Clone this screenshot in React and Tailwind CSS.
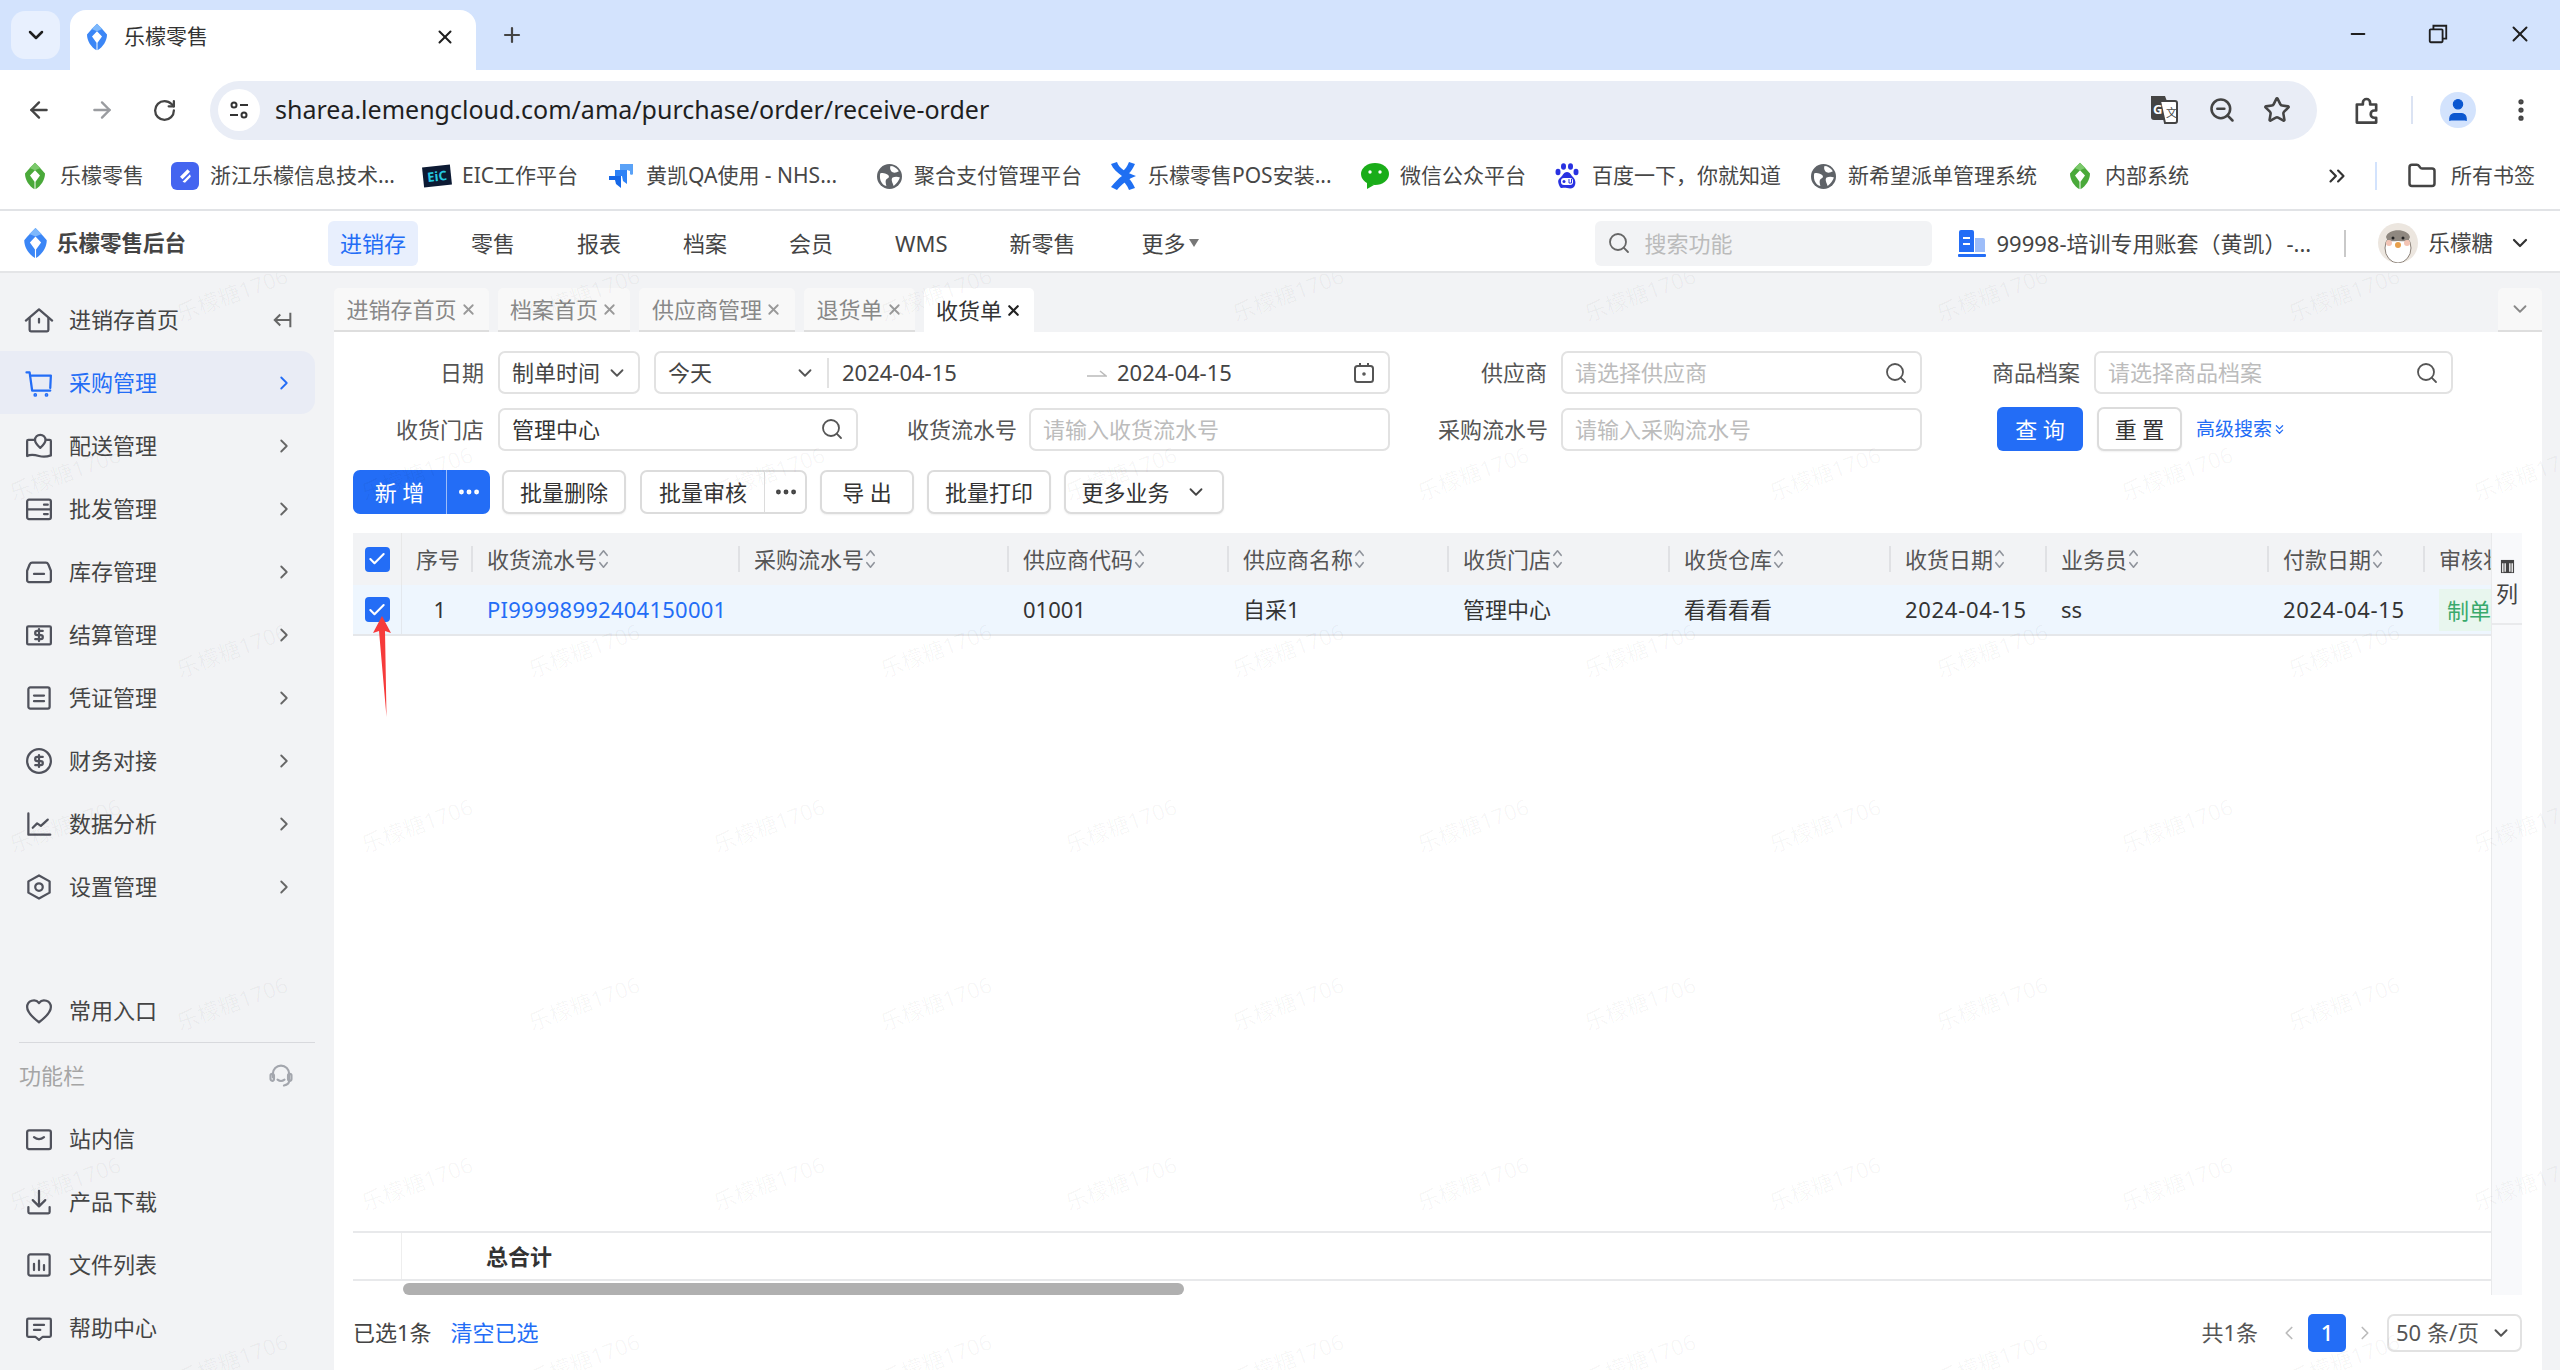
import React from 'react';
import { ArrowLeft, ArrowRight, RotateCw, Plus, X, ChevronDown, ChevronsDown, ChevronRight, ChevronLeft, Search, Star, ZoomOut, EllipsisVertical, ChevronsRight, Folder, User, Minus, Ellipsis, Check } from 'lucide-react';

const Ico = ({ className, children, sw = 1.8 }) => (
  <svg viewBox="0 0 24 24" fill="none" stroke="currentColor" strokeWidth={sw} strokeLinecap="round" strokeLinejoin="round" className={className}>
    {children}
  </svg>
);

const Logo = ({ color = '#3b86f6', light = '#7db8fc', className }) => (
  <svg viewBox="0 0 24 32" className={className}>
    <path d="M12 0C15 3 20 8 24 13 24 21 19 28 12.6 32V23L18 15.5 12 9 6 15.5 11.4 23V32C5 28 0 21 0 13 4 8 9 3 12 0Z" fill={color} />
    <path d="M12 0 18.5 6.5 12 9 5.5 6.5Z" fill={light} />
  </svg>
);

const dollar = <path d="M15 8.7h-4.4a1.65 1.65 0 0 0 0 3.3h2.8a1.65 1.65 0 0 1 0 3.3H9M12 7.2v9.6" />;

const sideIcons = {
  home: <><path d="M1.5 12.5 12 3.5l10.5 9" /><path d="M4.5 10.5V20a1 1 0 0 0 1 1h13a1 1 0 0 0 1-1v-9.5" /><path d="M12 11v3" /></>,
  cart: <><path d="M2 3.5h2.5L6.5 18H21" /><path d="M5.5 6H21.5L21 16" /><circle cx="9" cy="21.5" r=".6" /><circle cx="18" cy="21.5" r=".6" /></>,
  map: <><path d="M8 7H3.5a1 1 0 0 0-1 1v12c3-1.6 6-1 9.5 0s6.5.6 9.5-.5V8a1 1 0 0 0-1-1H18" /><path d="M13 3a4.2 4.2 0 0 1 4.2 4.2c0 2.5-4.2 6.3-4.2 6.3S8.8 9.7 8.8 7.2A4.2 4.2 0 0 1 13 3Z" /></>,
  wholesale: <><rect x="2.5" y="4.5" width="19" height="15.5" rx="1.5" /><path d="M2.5 12.2h19M16 8.5h3M16 16h3" /></>,
  store: <><path d="M6.5 4.5h11c1 0 1.5.5 2 1.5l2 5v7.5a1.5 1.5 0 0 1-1.5 1.5H4a1.5 1.5 0 0 1-1.5-1.5V11l2-5c.5-1 1-1.5 2-1.5Z" /><path d="M8 13.5h8" /></>,
  settle: <><rect x="2.5" y="5" width="19" height="14.5" rx="1" />{dollar}</>,
  voucher: <><rect x="3.5" y="3.5" width="17" height="17" rx="1.5" /><path d="M8 10h8M8 14.5h8" /></>,
  finance: <><circle cx="12" cy="12" r="9.5" />{dollar}</>,
  chart: <><path d="M3.5 3.5V20.5H21" /><path d="M7 15l3.5-3.5 3 2 5.5-5" /></>,
  setting: <><path d="M12 2.8 20.5 7.5v9L12 21.2 3.5 16.5v-9Z" /><circle cx="12" cy="12" r="3" /></>,
  heart: <path d="M12 21C6 16.5 2.5 13 2.5 8.8A5.3 5.3 0 0 1 12 5.6a5.3 5.3 0 0 1 9.5 3.2C21.5 13 18 16.5 12 21Z" />,
  mail: <><rect x="2.5" y="5" width="19" height="15" rx="1.5" /><path d="M8 10.5c2.5 2 5.5 2 8 0" /></>,
  download: <><path d="M12 3v12M7 10.5l5 5 5-5" /><path d="M3.5 16v4a1 1 0 0 0 1 1h15a1 1 0 0 0 1-1v-4" /></>,
  files: <><rect x="3.5" y="3.5" width="17" height="17" rx="1.5" /><path d="M8 11v5M12 8.5V16M16 12v4" /></>,
  help: <><path d="M3.5 4.5h17a1 1 0 0 1 1 1V18a1 1 0 0 1-1 1H15l-3 2.5L9 19H3.5a1 1 0 0 1-1-1V5.5a1 1 0 0 1 1-1Z" /><path d="M8 9.5h8M8 13.5h5" /></>,
};

const menu = [
  ['采购管理', 'cart', true],
  ['配送管理', 'map'],
  ['批发管理', 'wholesale'],
  ['库存管理', 'store'],
  ['结算管理', 'settle'],
  ['凭证管理', 'voucher'],
  ['财务对接', 'finance'],
  ['数据分析', 'chart'],
  ['设置管理', 'setting'],
];

const tools = [
  ['站内信', 'mail'],
  ['产品下载', 'download'],
  ['文件列表', 'files'],
  ['帮助中心', 'help'],
];

const GlobeIcon = () => (
  <svg viewBox="0 0 24 24" className="w-[25px] h-[25px]">
    <circle cx="12" cy="12" r="12" fill="#5f6368" />
    <path d="M3 9c3-1 5 0 7 1s2 3 0 4-2 3-1 7c-4-1-7-5-6-12ZM13 2c3 0 6 2 8 5-2 1-4 2-6 1s-3-4-2-6ZM15 13c2-1 5-1 7 0-1 3-3 6-6 8-1-3-3-6-1-8Z" fill="#fff" />
  </svg>
);

const bookmarks = [
  ['乐檬零售', 'w-[150px]', <Logo color="#4aa93a" light="#7cc96c" className="w-[20px] h-[28px]" />],
  ['浙江乐檬信息技术...', 'w-[252px]', <span className="w-[28px] h-[28px] rounded-[6px] bg-[#4465f0] flex items-center justify-center"><svg viewBox="0 0 24 24" className="w-[20px] h-[20px]"><path d="M6 13 15 4l3 3-9 9ZM9 19l9-9 1 3-7 7Z" fill="#fff" /></svg></span>],
  ['EIC工作平台', 'w-[184px]', <span className="w-[28px] h-[20px] bg-[#0c1a33] text-[#25c9e0] text-[13px] leading-[20px] text-center font-bold -rotate-6">EiC</span>],
  ['黄凯QA使用 - NHS...', 'w-[268px]', <svg viewBox="0 0 26 26" className="w-[26px] h-[26px]"><path d="M12 1h13v10a2 2 0 0 1-3 0V8l-3-1h-7Z" fill="#5aa2f7" /><path d="M7 7h12v14l-4-3-1-5H7Z" fill="#2e82f6" /><path d="M1 13h12v12l-5-4-1-4H1Z" fill="#1668e8" /></svg>],
  ['聚合支付管理平台', 'w-[234px]', <GlobeIcon />],
  ['乐檬零售POS安装...', 'w-[252px]', <svg viewBox="0 0 28 28" className="w-[28px] h-[28px]"><path d="M2 2 8 0c2 6 8 10 19 14-8 3-14 8-19 14l-6-3c4-5 8-9 11-11C8 10 4 7 2 2Z" fill="#1f6ff2" /><path d="M26 2l-6-2c-2 5-4 7-6 9l5 3c3-2 5-6 7-10ZM26 26l-6 2c-2-5-4-7-6-9l5-3c3 2 5 6 7 10Z" fill="#1f6ff2" /></svg>],
  ['微信公众平台', 'w-[192px]', <svg viewBox="0 0 28 26" className="w-[28px] h-[26px]"><ellipse cx="14" cy="11" rx="14" ry="11" fill="#1aad19" /><path d="M6 19l0 7 7-4Z" fill="#1aad19" /><circle cx="9" cy="9" r="1.7" fill="#fff" /><circle cx="19" cy="9" r="1.7" fill="#fff" /></svg>],
  ['百度一下，你就知道', 'w-[256px]', <svg viewBox="0 0 24 26" className="w-[24px] h-[26px]"><g fill="#2932e1"><ellipse cx="3" cy="9" rx="2.5" ry="3.2" /><ellipse cx="21" cy="9" rx="2.5" ry="3.2" /><ellipse cx="8.5" cy="3.5" rx="2.5" ry="3.3" /><ellipse cx="15.5" cy="3.5" rx="2.5" ry="3.3" /><path d="M12 9c3 0 4 3 6 5s3 5 2 8-3 4-8 3-6 2-8-3 0-6 2-8 3-5 6-5Z" /></g><rect x="6" y="15" width="12" height="7" rx="3" fill="#fff" /><circle cx="9" cy="18.5" r="1.5" fill="#2932e1" /><path d="M14 16v4h2.5v-4" fill="none" stroke="#2932e1" /></svg>],
  ['新希望派单管理系统', 'w-[257px]', <GlobeIcon />],
  ['内部系统', 'w-[130px]', <Logo color="#4aa93a" light="#7cc96c" className="w-[20px] h-[28px]" />],
];

const navs = ['零售', '报表', '档案', '会员', 'WMS', '新零售'];

const tabs = [
  ['进销存首页', 'w-[155px]'],
  ['档案首页', 'w-[132px]'],
  ['供应商管理', 'w-[156px]'],
  ['退货单', 'w-[111px]'],
  ['收货单', 'w-[110px]', true],
];

const columns = [
  { title: '收货流水号', w: 'w-[267px]', value: 'PI99998992404150001', cls: 'text-[#236df6] tracking-[0.25px]' },
  { title: '采购流水号', w: 'w-[269px]', value: '' },
  { title: '供应商代码', w: 'w-[220px]', value: '01001' },
  { title: '供应商名称', w: 'w-[220px]', value: '自采1' },
  { title: '收货门店', w: 'w-[221px]', value: '管理中心' },
  { title: '收货仓库', w: 'w-[221px]', value: '看看看看' },
  { title: '收货日期', w: 'w-[156px]', value: '2024-04-15', cls: 'tracking-[0.7px]' },
  { title: '业务员', w: 'w-[222px]', value: 'ss' },
  { title: '付款日期', w: 'w-[156px]', value: '2024-04-15', cls: 'tracking-[0.7px]' },
];

const marks = [];
[294, 473, 650, 825, 1003, 1183, 1360].forEach((y, row) => {
  for (let k = 0; k < 8; k++) {
    marks.push({ x: (row % 2 ? 65 : 232) + 352 * k, y: y - 273 });
  }
});

const Sorter = () => (
  <svg viewBox="0 0 12 26" className="w-[11px] h-[24px] ml-[1px] text-[#8f939b]" fill="none" stroke="currentColor" strokeWidth="1.7" strokeLinecap="round" strokeLinejoin="round">
    <path d="M2 9l4-5 4 5M2 17l4 5 4-5" />
  </svg>
);

const CheckBox = () => (
  <span className="w-[25px] h-[25px] rounded-[4px] bg-[#236df6] flex items-center justify-center">
    <Check className="w-[20px] h-[20px] text-white" strokeWidth={2.5} />
  </span>
);

const SearchInput = ({ className, placeholder, value }) => (
  <div className={`h-[43px] border-2 border-[#e2e2e2] rounded-[7px] flex items-center pl-[12px] pr-[12px] text-[22px] bg-white ${className}`}>
    <span className={`flex-1 ${value ? 'text-[#333]' : 'text-[#bcbcbc]'}`}>{value || placeholder}</span>
    <Search className="w-[24px] h-[24px] text-[#555]" strokeWidth={1.8} />
  </div>
);

const TextInput = ({ className, placeholder }) => (
  <div className={`h-[43px] border-2 border-[#e2e2e2] rounded-[7px] flex items-center pl-[12px] text-[22px] text-[#bcbcbc] bg-white ${className}`}>{placeholder}</div>
);

const Label = ({ className, children }) => (
  <span className={`text-[22px] text-[#555] text-right shrink-0 ${className}`}>{children}</span>
);

const Btn = ({ className, children }) => (
  <button className={`h-[44px] border-2 border-[#dcdcdc] rounded-[7px] bg-white text-[22px] text-[#333] flex items-center justify-center shadow-[0_1px_2px_rgba(0,0,0,0.06)] ${className}`}>{children}</button>
);

const App = () => {
  return (
    <div className="relative w-[2560px] h-[1370px] overflow-hidden flex flex-col bg-white [font-family:'Noto_Sans','Noto_Sans_CJK_SC',sans-serif]">
      {/* browser tab strip */}
      <div className="h-[70px] shrink-0 bg-[#d3e3fd] flex items-end pl-[11px] pr-[27px] text-[#1f1f1f]">
        <div className="w-[49px] h-[48px] mb-[11px] rounded-[14px] bg-[#e8f0fe] flex items-center justify-center">
          <ChevronDown className="w-[24px] h-[24px]" strokeWidth={2.5} />
        </div>
        <div className="ml-[10px] w-[406px] h-[60px] rounded-t-[16px] bg-white flex items-center pl-[17px] pr-[20px] pb-[6px]">
          <Logo className="w-[20px] h-[28px]" />
          <span className="ml-[17px] flex-1 text-[21px] text-[#333]">乐檬零售</span>
          <X className="w-[22px] h-[22px]" strokeWidth={2.2} />
        </div>
        <Plus className="ml-[24px] mb-[23px] w-[24px] h-[24px] text-[#444]" strokeWidth={2.2} />
        <div className="flex-1" />
        <div className="mb-[23px] flex items-center gap-[58px]">
          <Minus className="w-[22px] h-[22px]" strokeWidth={2} />
          <svg viewBox="0 0 24 24" className="w-[22px] h-[22px]" fill="none" stroke="currentColor" strokeWidth="2"><rect x="3" y="7" width="14" height="14" rx="1" /><path d="M7 7V3h14v14h-4" /></svg>
          <X className="w-[26px] h-[26px]" strokeWidth={1.8} />
        </div>
      </div>

      {/* address bar */}
      <div className="h-[70px] shrink-0 bg-white flex items-center pl-[26px] pt-[10px] text-[#444]">
        <ArrowLeft className="w-[26px] h-[26px]" strokeWidth={2.2} />
        <ArrowRight className="ml-[37px] w-[26px] h-[26px] text-[#9a9ca0]" strokeWidth={2.2} />
        <RotateCw className="ml-[37px] w-[25px] h-[25px]" strokeWidth={2.2} />
        <div className="ml-[33px] w-[2107px] shrink-0 h-[59px] rounded-full bg-[#e9edf6] flex items-center pl-[8px] pr-[26px]">
          <div className="w-[42px] h-[42px] rounded-full bg-white flex items-center justify-center">
            <svg viewBox="0 0 24 24" className="w-[24px] h-[24px]" fill="none" stroke="#333" strokeWidth="2"><circle cx="7" cy="7" r="2.5" /><path d="M13 7h8M3 17h8" /><circle cx="17" cy="17" r="2.5" /></svg>
          </div>
          <span className="ml-[15px] flex-1 text-[25px] text-[#1f1f1f]">sharea.lemengcloud.com/ama/purchase/order/receive-order</span>
          <svg viewBox="0 0 30 30" className="w-[30px] h-[30px]"><path d="M2 1h14l9 24H5a3 3 0 0 1-3-3Z" fill="#444" /><path d="M11 6h15a2 2 0 0 1 2 2v18a2 2 0 0 1-2 2H16Z" fill="#fff" stroke="#444" strokeWidth="2" /><text x="4" y="19" fontSize="13" fontWeight="700" fill="#fff">G</text><text x="17" y="22" fontSize="11" fill="#444">文</text></svg>
          <ZoomOut className="ml-[29px] w-[28px] h-[28px]" strokeWidth={2.2} />
          <Star className="ml-[27px] w-[28px] h-[28px]" strokeWidth={2.2} />
        </div>
        <svg viewBox="0 0 24 24" className="ml-[35px] w-[29px] h-[29px]" fill="none" stroke="currentColor" strokeWidth="2.2" strokeLinejoin="round">
          <path d="M4 7h5V5.5a3 3 0 0 1 6 0V7h5v5h-1.5a3 3 0 0 0 0 6H20v4H4Z" />
        </svg>
        <div className="ml-[30px] w-[2px] h-[28px] bg-[#dbe3f3]" />
        <div className="ml-[27px] w-[36px] h-[36px] rounded-full bg-[#d3e3fd] flex items-center justify-center">
          <User className="w-[28px] h-[28px] text-[#0b57d0] fill-[#0b57d0]" strokeWidth={1} />
        </div>
        <EllipsisVertical className="ml-[31px] w-[28px] h-[28px]" strokeWidth={2.5} />
      </div>

      {/* bookmarks */}
      <div className="h-[71px] shrink-0 bg-white border-b-2 border-[#e1e3e6] flex items-center pl-[20px] pr-[25px] pt-[3px] text-[21px] text-[#474747]">
        {bookmarks.map(([name, w, icon]) => (
          <div key={name} className={`${w} shrink-0 flex items-center gap-[10px] whitespace-nowrap`}>
            <span className="w-[30px] flex justify-center">{icon}</span>
            <span>{name}</span>
          </div>
        ))}
        <div className="flex-1" />
        <ChevronsRight className="ml-[3px] w-[26px] h-[26px] text-[#333]" strokeWidth={2} />
        <div className="ml-[25px] w-[2px] h-[28px] bg-[#d3e3fd]" />
        <Folder className="ml-[30px] w-[30px] h-[30px] text-[#444]" strokeWidth={2} />
        <span className="ml-[14px] whitespace-nowrap">所有书签</span>
      </div>

      {/* app header */}
      <div className="h-[62px] shrink-0 bg-white border-b-2 border-[#e4e5e7] flex items-center pl-[24px] pr-[28px] pt-[4px] text-[22px] text-[#444]">
        <Logo className="w-[23px] h-[30px]" />
        <span className="ml-[10px] w-[271px] font-bold text-[21.5px] text-[#444]">乐檬零售后台</span>
        <div className="h-[45px] px-[12px] rounded-[6px] bg-[#e8effd] text-[#236df6] flex items-center">进销存</div>
        <div className="ml-[41px] flex items-center gap-[38px]">
          {navs.map((n) => (
            <span key={n} className="px-[12px]">{n}</span>
          ))}
          <span className="ml-[4px] px-[12px] flex items-center">更多<svg viewBox="0 0 10 8" className="ml-[3px] w-[10px] h-[8px]"><path d="M0 0h10L5 8Z" fill="#777" /></svg></span>
        </div>
        <div className="flex-1" />
        <div className="w-[337px] h-[45px] rounded-[6px] bg-[#f2f3f5] flex items-center pl-[12px] text-[#bbb]">
          <Search className="w-[24px] h-[24px] text-[#666]" strokeWidth={1.8} />
          <span className="ml-[13px]">搜索功能</span>
        </div>
        <svg viewBox="0 0 28 28" className="ml-[26px] w-[28px] h-[28px]"><path d="M1 3a2 2 0 0 1 2-2h11a2 2 0 0 1 2 2v20H1Z" fill="#236df6" /><path d="M17 9h8a2 2 0 0 1 2 2v12H17Z" fill="#9dbdf9" /><rect x="5" y="8" width="7" height="2" fill="#fff" /><rect x="5" y="14" width="7" height="2" fill="#fff" /><rect y="25" width="28" height="3" rx="1" fill="#236df6" /></svg>
        <span className="ml-[10px] w-[333px] text-[22px] whitespace-nowrap">99998-培训专用账套（黄凯）-...</span>
        <div className="ml-[15px] w-[2px] h-[27px] bg-[#c9c9c9]" />
        <div className="ml-[32px] w-[40px] h-[40px] rounded-full bg-[#ece6df] overflow-hidden">
          <svg viewBox="0 0 40 40" className="w-[40px] h-[40px]">
            <ellipse cx="20" cy="25" rx="13" ry="15" fill="#fff" stroke="#8a8078" />
            <path d="M8 14c2-9 22-9 24 0-2 6-6 4-12 4S10 20 8 14Z" fill="#8f8880" />
            <circle cx="15" cy="15" r="1.5" fill="#222" /><circle cx="25" cy="15" r="1.5" fill="#222" />
            <circle cx="11" cy="20" r="3" fill="#f3c4b4" /><circle cx="29" cy="20" r="3" fill="#f3c4b4" />
            <circle cx="20" cy="22" r="3" fill="#e8a04c" />
          </svg>
        </div>
        <span className="ml-[10px] text-[21.5px]">乐檬糖</span>
        <ChevronDown className="ml-[15px] w-[24px] h-[24px] text-[#333]" strokeWidth={2.2} />
      </div>

      {/* app body */}
      <div className="relative flex-1 min-h-0 flex bg-[#f2f3f5]">
        <aside className="w-[334px] shrink-0 pt-[15px] flex flex-col text-[22px] text-[#444]">
          <div className="h-[63px] flex items-center pl-[24px] pr-[40px]">
            <Ico className="w-[30px] h-[30px] text-[#50525c]">{sideIcons.home}</Ico>
            <span className="ml-[15px] flex-1">进销存首页</span>
            <svg viewBox="0 0 24 24" className="w-[22px] h-[22px] text-[#666]" fill="none" stroke="currentColor" strokeWidth="2.2"><path d="M20 4v16M20 12H3M9 6l-6 6 6 6" /></svg>
          </div>
          {menu.map(([name, icon, active]) => (
            <div key={name} className={`h-[63px] w-[315px] rounded-r-[14px] flex items-center pl-[24px] pr-[20px] ${active ? 'bg-[#e9ecf5] text-[#236df6]' : ''}`}>
              <Ico className={`w-[30px] h-[30px] ${active ? 'text-[#236df6]' : 'text-[#50525c]'}`}>{sideIcons[icon]}</Ico>
              <span className="ml-[15px] flex-1">{name}</span>
              <ChevronRight className={`w-[22px] h-[22px] ${active ? 'text-[#236df6]' : 'text-[#666]'}`} strokeWidth={2} />
            </div>
          ))}
          <div className="flex-1" />
          <div className="h-[63px] flex items-center pl-[24px]">
            <Ico className="w-[30px] h-[30px] text-[#50525c]">{sideIcons.heart}</Ico>
            <span className="ml-[15px]">常用入口</span>
          </div>
          <div className="mx-[19px] h-[1px] bg-[#d8d9dd]" />
          <div className="h-[64px] flex items-center pl-[19px] pr-[39px] text-[#a5a5a5]">
            <span className="flex-1">功能栏</span>
            <Ico className="w-[28px] h-[28px] text-[#a3a6ad]"><path d="M5 14V11a7 7 0 0 1 14 0v6c0 2-2 3.5-4.5 4" /><rect x="3" y="11" width="3" height="6" rx="1.5" /><rect x="18" y="11" width="3" height="6" rx="1.5" /><path d="M9 16c2 1.5 4 1.5 6 0" /></Ico>
          </div>
          {tools.map(([name, icon]) => (
            <div key={name} className="h-[63px] flex items-center pl-[24px]">
              <Ico className="w-[30px] h-[30px] text-[#50525c]">{sideIcons[icon]}</Ico>
              <span className="ml-[15px]">{name}</span>
            </div>
          ))}
          <div className="h-[11px]" />
        </aside>

        <div className="flex-1 min-w-0 flex flex-col pr-[18px]">
          {/* page tabs */}
          <div className="h-[59px] shrink-0 flex items-end text-[22px]">
            <div className="flex gap-[9px]">
              {tabs.map(([name, w, active]) => (
                <div key={name} className={`${w} h-[44px] rounded-t-[5px] flex items-center justify-center gap-[3px] ${active ? 'bg-white text-[#333]' : 'bg-[#f8f8f8] border-b-2 border-[#dedede] text-[#888]'}`}>
                  <span>{name}</span>
                  <X className={`w-[17px] h-[17px] ${active ? 'text-[#222]' : 'text-[#999]'}`} strokeWidth={active ? 3 : 2.5} />
                </div>
              ))}
            </div>
            <div className="flex-1" />
            <div className="w-[44px] h-[44px] rounded-t-[5px] bg-[#f8f8f8] border-b-2 border-[#dedede] flex items-center justify-center">
              <ChevronDown className="w-[22px] h-[22px] text-[#888]" strokeWidth={2} />
            </div>
          </div>

          {/* page panel */}
          <div className="flex-1 min-h-0 bg-white flex flex-col">
            <div className="mt-[19px] flex items-center">
              <Label className="w-[150px]">日期</Label>
              <div className="ml-[14px] w-[142px] h-[43px] border-2 border-[#e2e2e2] rounded-[7px] flex items-center pl-[12px] pr-[10px] text-[22px] text-[#444]">
                <span className="flex-1">制单时间</span>
                <ChevronDown className="w-[22px] h-[22px] text-[#555]" strokeWidth={2} />
              </div>
              <div className="ml-[14px] w-[736px] h-[43px] border-2 border-[#e2e2e2] rounded-[7px] flex items-center pl-[12px] pr-[12px] text-[22px] text-[#444]">
                <span className="w-[126px]">今天</span>
                <ChevronDown className="w-[22px] h-[22px] text-[#555]" strokeWidth={2} />
                <div className="ml-[11px] w-[2px] h-[30px] bg-[#e2e2e2]" />
                <span className="ml-[13px] w-[245px]">2024-04-15</span>
                <svg viewBox="0 0 20 10" className="w-[20px] h-[10px]" fill="none" stroke="#bbb" strokeWidth="1.5"><path d="M0 8h19l-6-5" /></svg>
                <span className="ml-[10px] flex-1">2024-04-15</span>
                <svg viewBox="0 0 24 24" className="w-[24px] h-[24px]" fill="none" stroke="#555" strokeWidth="2"><rect x="3" y="5" width="18" height="16" rx="2.5" /><path d="M8 2v4M16 2v4" /><circle cx="12" cy="13" r=".8" /></svg>
              </div>
              <Label className="w-[157px]">供应商</Label>
              <SearchInput className="ml-[14px] w-[361px]" placeholder="请选择供应商" />
              <Label className="w-[158px]">商品档案</Label>
              <SearchInput className="ml-[14px] w-[359px]" placeholder="请选择商品档案" />
            </div>

            <div className="mt-[13px] flex items-center">
              <Label className="w-[150px]">收货门店</Label>
              <SearchInput className="ml-[14px] w-[360px]" value="管理中心" />
              <Label className="w-[159px]">收货流水号</Label>
              <TextInput className="ml-[12px] w-[361px]" placeholder="请输入收货流水号" />
              <Label className="w-[158px]">采购流水号</Label>
              <TextInput className="ml-[13px] w-[361px]" placeholder="请输入采购流水号" />
              <button className="ml-[75px] w-[86px] h-[44px] rounded-[6px] bg-[#236df6] text-white text-[22px]">查 询</button>
              <Btn className="ml-[14px] w-[85px]">重 置</Btn>
              <span className="ml-[14px] text-[19px] text-[#236df6] flex items-center">高级搜索<ChevronsDown className="w-[15px] h-[15px]" strokeWidth={2} /></span>
            </div>

            {/* toolbar */}
            <div className="mt-[19px] ml-[19px] flex items-center">
              <div className="w-[137px] h-[44px] rounded-[7px] bg-[#236df6] text-white text-[22px] flex items-center">
                <span className="w-[93px] text-center">新 增</span>
                <div className="w-[1px] h-[44px] bg-[#9dbdf9]" />
                <Ellipsis className="ml-[9px] w-[26px] h-[26px]" strokeWidth={2.5} />
              </div>
              <Btn className="ml-[12px] w-[124px]">批量删除</Btn>
              <div className="ml-[14px] w-[167px] h-[44px] border-2 border-[#dcdcdc] rounded-[7px] text-[22px] text-[#333] flex items-center">
                <span className="w-[122px] text-center">批量审核</span>
                <div className="w-[1px] h-[42px] bg-[#dcdcdc]" />
                <Ellipsis className="ml-[8px] w-[26px] h-[26px] text-[#444]" strokeWidth={2.5} />
              </div>
              <Btn className="ml-[13px] w-[94px]">导 出</Btn>
              <Btn className="ml-[13px] w-[124px]">批量打印</Btn>
              <Btn className="ml-[13px] w-[160px] gap-[15px]">更多业务<ChevronDown className="w-[22px] h-[22px] text-[#444]" strokeWidth={2} /></Btn>
            </div>

            {/* table */}
            <div className="mt-[19px] ml-[19px] h-[762px] flex">
              <div className="w-[2138px] shrink-0 flex flex-col overflow-hidden">
                <div className="h-[52px] shrink-0 bg-[#f2f3f5] flex items-center text-[22px] text-[#555] whitespace-nowrap">
                  <div className="w-[49px] shrink-0 h-full border-r border-[#e8e8e8] flex items-center justify-center"><CheckBox /></div>
                  <div className="w-[71px] shrink-0 pl-[14px] h-[26px] flex items-center border-r-2 border-[#e0e1e4]">序号</div>
                  {columns.map((c) => (
                    <div key={c.title} className={`${c.w} shrink-0 pl-[14px] h-[26px] flex items-center border-r-2 border-[#e0e1e4]`}>
                      {c.title}<Sorter />
                    </div>
                  ))}
                  <div className="pl-[14px]">审核状态</div>
                </div>
                <div className="h-[51px] shrink-0 bg-[#eef6fe] border-b-2 border-[#e5e7ea] flex items-center text-[22px] text-[#333] whitespace-nowrap">
                  <div className="w-[49px] shrink-0 h-full border-r border-[#e3e8ee] flex items-center justify-center"><CheckBox /></div>
                  <div className="w-[71px] shrink-0 pr-[27px] text-right">1</div>
                  {columns.map((c) => (
                    <div key={c.title} className={`${c.w} shrink-0 pl-[14px] ${c.cls || ''}`}>{c.value}</div>
                  ))}
                  <div className="ml-[14px] w-[66px] pl-[8px] h-[42px] leading-[42px] bg-[#e8f6ee] text-[#39a96b]">制单</div>
                </div>
                <div className="flex-1" />
                <div className="h-[50px] shrink-0 border-y-2 border-[#e8e9eb] flex items-center text-[22px] font-bold text-[#333]">
                  <div className="w-[49px] h-full border-r border-[#eee]" />
                  <span className="ml-[84px]">总合计</span>
                </div>
                <div className="h-[14px] shrink-0 pl-[50px] pt-[2px]">
                  <div className="w-[781px] h-[12px] rounded-full bg-[#b0b0b0]" />
                </div>
              </div>
              <div className="w-[31px] shrink-0 bg-[#f8f9fb] border-l border-[#e9eaec] flex flex-col items-center text-[22px] text-[#444]">
                <svg viewBox="0 0 16 16" className="mt-[26px] w-[15px] h-[15px]"><path d="M1 1h14v14H1Z" fill="#444" /><path d="M5.5 4.5v9M10.5 4.5v9M3 4.5v9.5M13 4.5v9.5" stroke="#fff" strokeWidth="1.4" /></svg>
                <span className="mt-[4px] leading-[30px]">列</span>
                <div className="mt-[15px] w-full h-[2px] bg-[#e9eaec]" />
              </div>
            </div>

            {/* footer */}
            <div className="flex-1 ml-[19px] mr-[20px] flex items-center text-[22px] text-[#444]">
              <span>已选1条</span>
              <span className="ml-[19px] text-[#236df6]">清空已选</span>
              <div className="flex-1" />
              <span className="text-[#555]">共1条</span>
              <ChevronLeft className="ml-[20px] w-[22px] h-[22px] text-[#bbb]" strokeWidth={1.8} />
              <div className="ml-[8px] w-[38px] h-[38px] rounded-[5px] bg-[#236df6] text-white font-medium flex items-center justify-center">1</div>
              <ChevronRight className="ml-[8px] w-[22px] h-[22px] text-[#bbb]" strokeWidth={1.8} />
              <div className="ml-[11px] w-[135px] h-[38px] border-2 border-[#e2e2e2] rounded-[7px] flex items-center pl-[7px] pr-[8px] text-[#555]">
                <span className="flex-1 whitespace-nowrap">50 条/页</span>
                <ChevronDown className="w-[22px] h-[22px] text-[#555]" strokeWidth={2.2} />
              </div>
            </div>
          </div>
        </div>

        {/* account watermark */}
        <div className="absolute inset-0 overflow-hidden pointer-events-none">
          {marks.map((m) => (
            <span
              key={`${m.x}-${m.y}`}
              className="absolute -translate-x-1/2 -translate-y-1/2 -rotate-[20deg] whitespace-nowrap text-[22px] text-black/[0.035]"
              style={{ left: m.x, top: m.y }}
            >
              乐檬糖1706
            </span>
          ))}
        </div>
      </div>

      {/* red annotation arrow */}
      <svg viewBox="0 0 20 102" className="absolute left-[373px] top-[616px] w-[20px] h-[102px] pointer-events-none">
        <path d="M9 0 18 17 12 15 13.5 101 6 15 0 17Z" fill="#f63b3b" />
      </svg>
    </div>
  );
};

export default App;
